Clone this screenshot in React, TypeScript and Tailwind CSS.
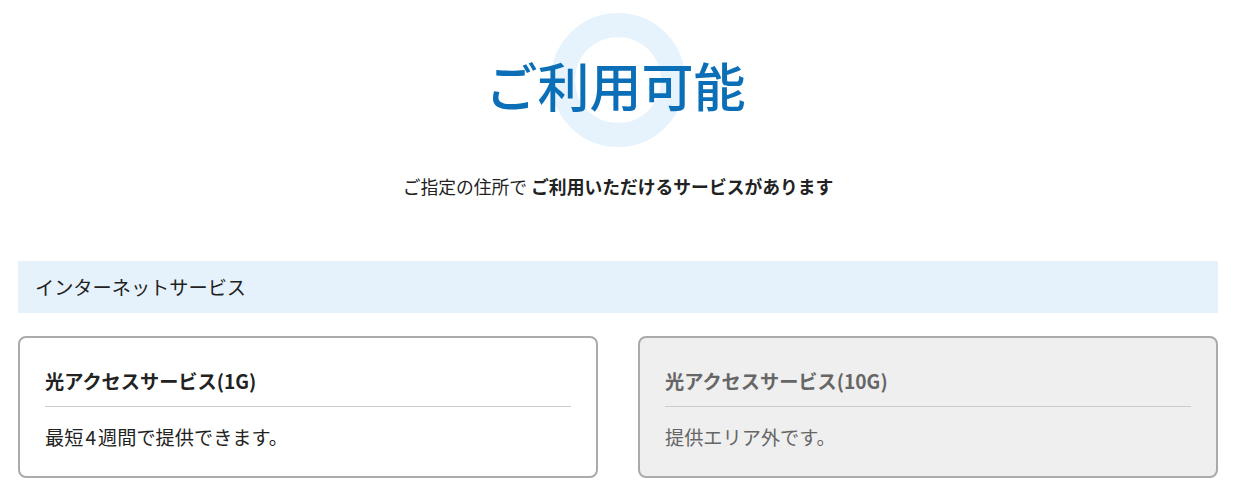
import React from "react";

export default function App() {
  return (
    <div
      className="min-h-[497px] bg-white text-[#222]"
      style={{ fontFamily: '"Noto Sans CJK JP", "Noto Sans", sans-serif' }}
    >
      <div className="mx-auto w-[1200px]">
        <div className="relative mt-[13px] flex h-[134px] items-center justify-center">
          <div className="absolute left-1/2 top-0 h-[134px] w-[134px] -translate-x-1/2 rounded-full border-[24px] border-[#e7f3fc]" />
          <h1 className="relative pr-[5px] pt-[10px] text-[52px] font-medium leading-none text-[#0b6fb8]">
            ご利用可能
          </h1>
        </div>
        <p className="mt-[25px] text-center text-[17.8px] leading-[28px]">
          ご指定の住所で <span className="font-bold">ご利用いただけるサービスがあります</span>
        </p>
        <div className="mt-[61px] flex h-[52px] items-center bg-[#e5f2fb] px-[17px] text-[19.2px]">
          インターネットサービス
        </div>
        <div className="mt-[23px] grid grid-cols-2 gap-[40px]">
          <div className="h-[142px] rounded-[8px] border-2 border-[#aaaaaa] bg-white px-[25px] pt-[28px]">
            <div className="border-b border-[#cccccc] pb-[10px] text-[19.2px] font-bold leading-[30px]">
              光アクセスサービス(1G)
            </div>
            <div className="mt-[15px] text-[19.2px] leading-[30px]">
              最短<span className="px-[2px]">4</span>週間で提供できます。
            </div>
          </div>
          <div className="h-[142px] rounded-[8px] border-2 border-[#aaaaaa] bg-[#efefef] bg-[radial-gradient(circle,#e9e9e9_0.6px,transparent_0.8px)] bg-[length:8px_8px] px-[25px] pt-[28px] text-[#666666]">
            <div className="border-b border-[#cccccc] pb-[10px] text-[19.2px] font-bold leading-[30px]">
              光アクセスサービス(10G)
            </div>
            <div className="mt-[15px] text-[19.2px] leading-[30px]">提供エリア外です。</div>
          </div>
        </div>
      </div>
    </div>
  );
}
